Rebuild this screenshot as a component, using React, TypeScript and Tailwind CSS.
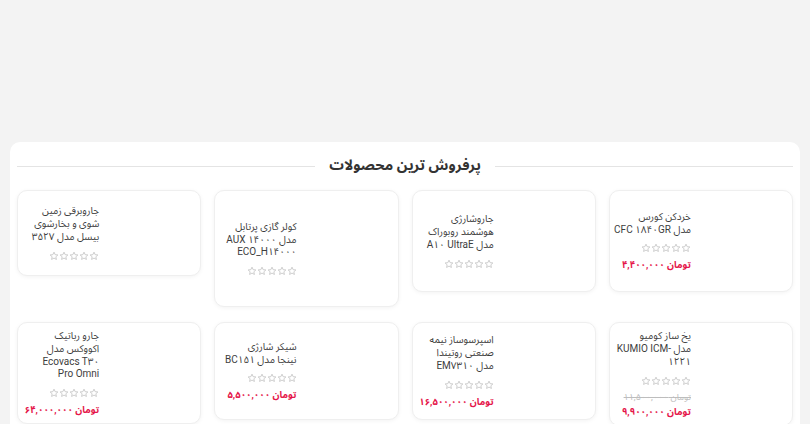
import React from "react";

const FONT = 'Roboto, "Noto Sans Arabic", "DejaVu Sans", sans-serif';

type Line = React.ReactNode;
type Product = {
  lines: Line[];
  price?: string;
  oldPrice?: string;
  h: number;
};

const Ltr = ({ children }: { children: React.ReactNode }) => (
  <span dir="ltr" className="[unicode-bidi:isolate]">
    {children}
  </span>
);

const row1: Product[] = [
  { lines: ["خردکن کورس", <>مدل <Ltr>CFC ۱۸۴۰GR</Ltr></>], price: "۴,۴۰۰,۰۰۰", h: 102 },
  { lines: ["جاروشارژی", "هوشمند روبوراک", <>مدل <Ltr>A۱۰ UltraE</Ltr></>], h: 102 },
  { lines: ["کولر گازی پرتابل", <>مدل <Ltr>AUX ۱۴۰۰۰</Ltr></>, <Ltr>ECO_H۱۴۰۰۰</Ltr>], h: 117 },
  { lines: ["جاروبرقی زمین", "شوی و بخارشوی", "بیسل مدل ۳۵۲۷"], h: 86 },
];

const row2: Product[] = [
  {
    lines: ["یخ ساز کومیو", <>مدل <Ltr>KUMIO ICM-</Ltr></>, "۱۲۲۱"],
    oldPrice: "۱۱,۵۰۰,۰۰۰",
    price: "۹,۹۰۰,۰۰۰",
    h: 104,
  },
  { lines: ["اسپرسوساز نیمه", "صنعتی روتیندا", <>مدل <Ltr>EM۷۳۱۰</Ltr></>], price: "۱۶,۵۰۰,۰۰۰", h: 98 },
  { lines: ["شیکر شارژی", <>نینجا مدل <Ltr>BC۱۵۱</Ltr></>], price: "۵,۵۰۰,۰۰۰", h: 98 },
  {
    lines: ["جارو رباتیک", "اکووکس مدل", <Ltr>Ecovacs T۳۰</Ltr>, <Ltr>Pro Omni</Ltr>],
    price: "۶۴,۰۰۰,۰۰۰",
    h: 102,
  },
];

const Star = () => (
  <svg width="10" height="10" viewBox="0 0 24 24" fill="none" stroke="#c4c4c4" strokeWidth="2" strokeLinejoin="round">
    <path d="M12 2.8l2.8 6 6.5.7-4.9 4.4 1.4 6.4L12 17l-5.8 3.3 1.4-6.4-4.9-4.4 6.5-.7z" />
  </svg>
);

const Card = ({ p }: { p: Product }) => (
  <div
    className="flex items-center rounded-[10px] border border-[#efefef] bg-white shadow-[0_1px_4px_rgba(0,0,0,0.05)]"
    style={{ height: p.h }}
  >
    <div className="w-[101px] shrink-0" />
    <div className="flex flex-col items-start text-right">
      <div className="flex flex-col items-start text-[10px] leading-[12.7px] text-[#3d3d3d]">
        {p.lines.map((l, i) => (
          <div key={i} className="whitespace-nowrap">
            {l}
          </div>
        ))}
      </div>
      <div className="mt-[7px] flex h-[10px]">
        {[0, 1, 2, 3, 4].map((i) => (
          <Star key={i} />
        ))}
      </div>
      {p.oldPrice && (
        <div className="mt-[5px] whitespace-nowrap text-[9px] leading-[12px] text-[#bdbdbd] line-through">
          تومان {p.oldPrice}
        </div>
      )}
      {p.price && (
        <div
          className={`${p.oldPrice ? "mt-[3px]" : "mt-[6px]"} whitespace-nowrap text-[9.5px] font-bold leading-[12px] text-[#e5164a]`}
        >
          تومان {p.price}
        </div>
      )}
    </div>
  </div>
);

export default function App() {
  return (
    <div className="min-h-screen bg-[#f3f3f3] px-[10px] pt-[142px]" style={{ fontFamily: FONT }} dir="rtl">
      <div className="rounded-t-[10px] bg-white px-[7px] pb-[20px] pt-[13px]">
        <div className="flex h-[22px] items-center gap-[14px]">
          <div className="h-px flex-1 bg-[#e4e4e4]" />
          <div className="whitespace-nowrap text-[14.5px] font-bold text-[#333]">پرفروش ترین محصولات</div>
          <div className="h-px flex-1 bg-[#e4e4e4]" />
        </div>
        <div className="mt-[13px] grid grid-cols-4 items-start gap-x-[13px] gap-y-[15px]">
          {row1.map((p, i) => (
            <Card key={i} p={p} />
          ))}
          {row2.map((p, i) => (
            <Card key={"b" + i} p={p} />
          ))}
        </div>
      </div>
    </div>
  );
}
